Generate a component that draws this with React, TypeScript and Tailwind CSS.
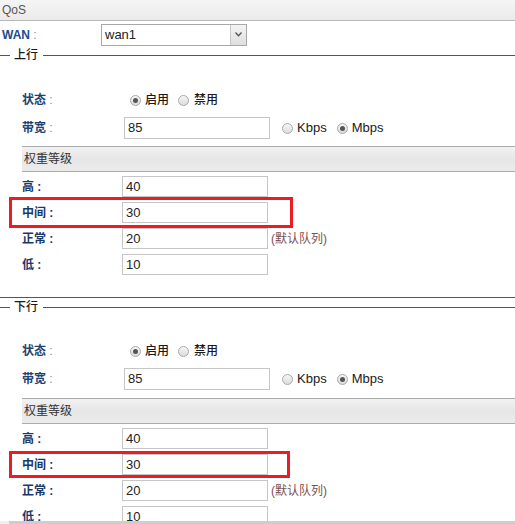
import React from 'react';

const font = { fontFamily: '"Liberation Sans", Arial, "Noto Sans CJK SC", sans-serif' };

function Radio({ checked }: { checked?: boolean }) {
    return (
        <span className="relative inline-flex h-[11px] w-[11px] shrink-0 items-center justify-center rounded-full border border-[#a9a9a9] bg-gradient-to-b from-[#f6f6f6] to-[#dcdcdc]">
            {checked && <span className="h-[5px] w-[5px] rounded-full bg-[#555]" />}
        </span>
    );
}

function TextBox({ value, width = 'w-[146px]' }: { value: string; width?: string }) {
    return (
        <div className={`${width} flex h-full items-center border border-[#c6c6c6] bg-white pl-[3px] text-[13px] text-[#222]`}>
            {value}
        </div>
    );
}

function Legend({ title }: { title: string }) {
    return (
        <div className="flex h-[14px] items-center">
            <div className="h-px w-[10px] bg-[#2360a0]" />
            <span className="ml-[4px] text-[12px] font-medium leading-none text-[#1a1a1a]">{title}</span>
            <div className="ml-[5px] h-px flex-1 bg-[#2360a0]" />
        </div>
    );
}

type WeightRow = { label: string; value: string; note?: string };

function Section({
    title,
    statusGap,
    bwGap,
    barGap,
    redTop,
    redHeight,
    redWidth,
}: {
    title: string;
    statusGap: string;
    bwGap: string;
    barGap: string;
    redTop: number;
    redHeight: number;
    redWidth: number;
}) {
    const rows: WeightRow[] = [
        { label: '高', value: '40' },
        { label: '中间', value: '30' },
        { label: '正常', value: '20', note: '(默认队列)' },
        { label: '低', value: '10' },
    ];

    return (
        <div>
            <Legend title={title} />
            <div className="pl-[22px]">
                <div className={`${statusGap} flex h-[22px] items-center`}>
                    <span className="w-[102px] text-[12px] font-bold text-[#1d4374]">
                        状态 <span className="font-normal text-[#7d8ea8]">:</span>
                    </span>
                    <span className="ml-[6px] flex items-center">
                        <Radio checked />
                        <span className="ml-[4px] text-[12px] font-medium text-[#1a1a1a]">启用</span>
                        <span className="ml-[9px]" />
                        <Radio />
                        <span className="ml-[5px] text-[12px] font-medium text-[#1a1a1a]">禁用</span>
                    </span>
                </div>
                <div className={`${bwGap} flex h-[22px] items-center`}>
                    <span className="w-[102px] text-[12px] font-bold text-[#1d4374]">
                        带宽 <span className="font-normal text-[#7d8ea8]">:</span>
                    </span>
                    <TextBox value="85" />
                    <span className="ml-[12px] flex items-center">
                        <Radio />
                        <span className="ml-[4px] text-[13px] text-[#1a1a1a]">Kbps</span>
                        <span className="ml-[10px]" />
                        <Radio checked />
                        <span className="ml-[4px] text-[13px] text-[#1a1a1a]">Mbps</span>
                    </span>
                </div>
                <div
                    className={`${barGap} flex h-[26px] items-center border-y border-[#ababab] bg-gradient-to-b from-[#f2f2f2] via-[#e6e6e6] to-[#ececec] pl-[2px] text-[12px] text-[#333]`}
                >
                    权重等级
                </div>
                <div className="mt-[4px] flex flex-col gap-[5px]">
                    {rows.map((row, i) => (
                        <div key={row.label} className="relative flex h-[21px] items-center">
                            <span className="w-[100px] text-[12px] font-bold text-[#17396b]">{row.label} :</span>
                            <TextBox value={row.value} />
                            {row.note && <span className="ml-[3px] text-[12px] text-[#7a4f4f]">{row.note}</span>}
                            {i === 1 && (
                                <div
                                    className="absolute left-[-13px] border-[3px] border-[#ec1c24]"
                                    style={{ top: redTop, height: redHeight, width: redWidth }}
                                />
                            )}
                        </div>
                    ))}
                </div>
            </div>
        </div>
    );
}

export default function App() {
    return (
        <div className="relative h-[524px] w-[515px] overflow-hidden bg-white" style={font}>
            <div className="flex h-[21px] items-center border-b border-[#b8b8b8] bg-gradient-to-b from-[#f5f5f5] to-[#ebebeb] pl-[2px] text-[12px] text-[#555]">
                QoS
            </div>

            <div className="mt-[2px] flex h-[23px] items-center">
                <span className="w-[101px] pl-[2px] text-[12px] font-bold text-[#1c4b8c]">
                    WAN <span className="font-normal text-[#7d8ea8]">:</span>
                </span>
                <div className="flex h-[22px] w-[146px] items-center border border-[#a8a8a8] bg-white">
                    <span className="flex-1 pl-[3px] text-[13px] text-[#222]">wan1</span>
                    <span className="flex h-full w-[16px] items-center justify-center border-l border-[#c8c8c8] bg-gradient-to-b from-[#f4f4f4] to-[#dedede]">
                        <svg width="7" height="5" viewBox="0 0 7 5">
                            <path d="M0.5 0.5 L3.5 3.8 L6.5 0.5" fill="none" stroke="#555" strokeWidth="1.3" />
                        </svg>
                    </span>
                </div>
            </div>

            <div className="mt-[2px]">
                <Section
                    title="上行"
                    statusGap="mt-[27px]"
                    bwGap="mt-[6px]"
                    barGap="mt-[7px]"
                    redTop={-5}
                    redHeight={31}
                    redWidth={284}
                />
            </div>

            <div className="mt-[22px] h-px bg-[#2360a0]" />

            <div className="mt-[2px]">
                <Section
                    title="下行"
                    statusGap="mt-[26px]"
                    bwGap="mt-[6px]"
                    barGap="mt-[8px]"
                    redTop={-3}
                    redHeight={27}
                    redWidth={281}
                />
            </div>

            <div className="absolute bottom-0 left-0 flex h-[3px] w-full">
                <div className="w-[9px] bg-[#efefef]" />
                <div className="flex-1 bg-[#cdcdcd]" />
            </div>
        </div>
    );
}
